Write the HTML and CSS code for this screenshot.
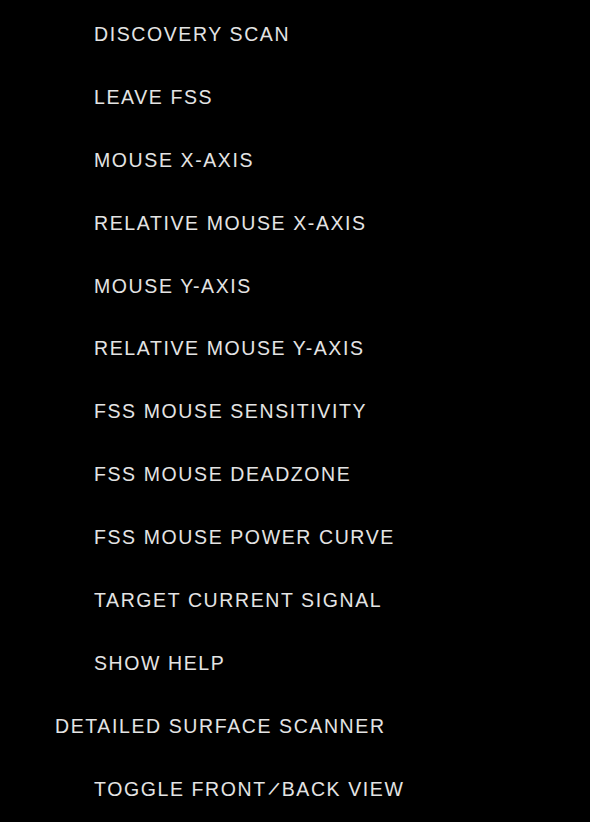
FILE: index.html
```html
<!DOCTYPE html>
<html lang="en">
<head>
<meta charset="utf-8">
<title>Controls</title>
<link rel="stylesheet" href="styles.css">
</head>
<body>
<ul class="bindings">
  <li class="item">DISCOVERY SCAN</li>
  <li class="item">LEAVE FSS</li>
  <li class="item">MOUSE X-AXIS</li>
  <li class="item">RELATIVE MOUSE X-AXIS</li>
  <li class="item">MOUSE Y-AXIS</li>
  <li class="item">RELATIVE MOUSE Y-AXIS</li>
  <li class="item">FSS MOUSE SENSITIVITY</li>
  <li class="item">FSS MOUSE DEADZONE</li>
  <li class="item">FSS MOUSE POWER CURVE</li>
  <li class="item">TARGET CURRENT SIGNAL</li>
  <li class="item">SHOW HELP</li>
  <li class="item section">DETAILED SURFACE SCANNER</li>
  <li class="item">TOGGLE FRONT<span class="slash">/</span>BACK VIEW</li>
</ul>
</body>
</html>
```
FILE: styles.css
```css
html, body {
  margin: 0;
  padding: 0;
  background: #000;
}
body {
  width: 590px;
  height: 822px;
  overflow: hidden;
}
.bindings {
  list-style: none;
  margin: 0;
  padding: 3px 0 0 0;
  font-family: "Liberation Sans", Arial, sans-serif;
  font-size: 19.5px;
  letter-spacing: 1.6px;
  color: #e4e4e4;
}
.item {
  height: 62.9px;
  line-height: 62.9px;
  padding-left: 94px;
  white-space: nowrap;
}
.section {
  padding-left: 55px;
}
.slash {
  display: inline-block;
  transform: rotate(25deg);
  margin: 0 4px;
}
```
